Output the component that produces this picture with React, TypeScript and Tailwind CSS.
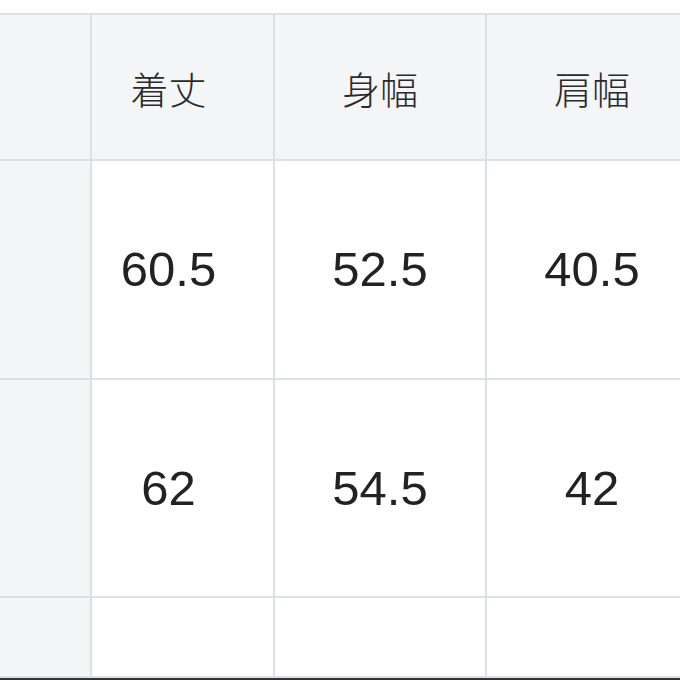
import React from "react";

const headers = ["着丈", "身幅", "肩幅"];
const rows = [
  ["60.5", "52.5", "40.5"],
  ["62", "54.5", "42"],
  ["", "", ""],
];

export default function App() {
  const font = { fontFamily: '"Liberation Sans", Arial, "Noto Sans CJK JP", sans-serif' };
  return (
    <div className="w-[680px] h-[680px] overflow-hidden bg-white relative" style={font}>
      <div className="pt-[13px]">
        <div className="grid grid-cols-[90px_181px_210px_210px] grid-rows-[144px_217px_216px_78px] gap-[2px] bg-[#dcdfe3] pt-[2px] pb-[2px] w-[697px]">
          <div className="bg-[#f4f5f6]" />
          {headers.map((h, i) => (
            <div
              key={h}
              className={`bg-[#f4f5f6] flex items-center justify-center text-[38px] font-light text-[#2a2a2a] ${i === 0 ? "pr-[28px]" : ""}`}
              style={{ fontFamily: '"Noto Sans CJK JP", "Noto Sans", sans-serif' }}
            >
              {h}
            </div>
          ))}
          {rows.map((r, ri) => (
            <React.Fragment key={ri}>
              <div className="bg-[#f4f5f6]" />
              {r.map((v, ci) => (
                <div
                  key={ci}
                  className={`bg-white flex items-center justify-center text-[49px] text-[#222222] leading-none ${ci === 0 ? "pr-[28px]" : ""}`}
                >
                  {v}
                </div>
              ))}
            </React.Fragment>
          ))}
        </div>
      </div>
      <div className="absolute left-0 bottom-0 w-full h-[2px] bg-[#333333]" />
    </div>
  );
}
